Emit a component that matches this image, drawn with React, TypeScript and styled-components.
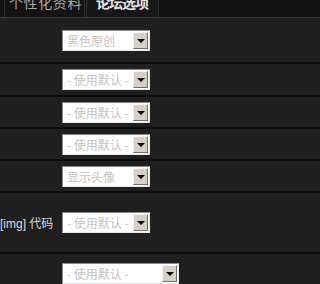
import styled, { createGlobalStyle } from "styled-components";

const GlobalStyle = createGlobalStyle`
  html, body {
    margin: 0;
    padding: 0;
    background: #1f1f1f;
    overflow: hidden;
  }
  body {
    font-family: "Liberation Sans", "Noto Sans CJK SC", sans-serif;
  }
`;

const TabBar = styled.div`
  display: flex;
  height: 17px;
  background: #121212;
  border-bottom: 1px solid #3a3a3a;
  overflow: hidden;
`;

const Tab = styled.div<{ $active?: boolean }>`
  display: flex;
  align-items: flex-end;
  height: 17px;
  margin-left: ${(p) => (p.$active ? "1px" : "4px")};
  padding: 0 ${(p) => (p.$active ? "10px" : "2px")} 0 ${(p) => (p.$active ? "9px" : "4px")};
  border-left: 1px solid #2e2e2e;
  border-right: 1px solid #2e2e2e;
  background: ${(p) => (p.$active ? "#171717" : "#131313")};
  color: ${(p) => (p.$active ? "#e4e4e4" : "#a8a8a8")};
  font-weight: ${(p) => (p.$active ? "bold" : "normal")};
  font-family: "Noto Sans CJK SC", sans-serif;
  font-size: 14px;
  letter-spacing: ${(p) => (p.$active ? "-1px" : "0.6px")};
  line-height: 14px;
  white-space: nowrap;
  span {
    display: block;
    margin-bottom: 8px;
  }
`;

const Rows = styled.div`
  display: flex;
  flex-direction: column;
`;

const Row = styled.div<{ $h: number }>`
  display: grid;
  grid-template-columns: 62px auto;
  align-items: center;
  height: ${(p) => p.$h}px;
  border-bottom: 2px solid #0b0b0b;
  box-sizing: border-box;
`;

const Label = styled.div`
  color: #dcdcdc;
  font-size: 12px;
  text-align: right;
  padding-right: 11px;
  white-space: nowrap;
`;

const Select = styled.div<{ $w: number }>`
  display: flex;
  align-items: center;
  width: ${(p) => p.$w}px;
  height: 21px;
  box-sizing: border-box;
  border-top: 1px solid #8a8a8a;
  border-left: 1px solid #8a8a8a;
  border-right: 1px solid #e8e8e8;
  border-bottom: 1px solid #e8e8e8;
  background: #fff;
  padding: 1px;
`;

const Value = styled.div`
  flex: 1;
  color: #c4c4c4;
  font-family: "Noto Sans CJK SC", sans-serif;
  font-size: 12px;
  padding-left: 3px;
  white-space: nowrap;
  overflow: hidden;
`;

const Arrow = styled.div`
  display: flex;
  align-items: center;
  justify-content: center;
  width: 15px;
  height: 17px;
  box-sizing: border-box;
  background: #d4d0c8;
  border-top: 1px solid #f4f4f4;
  border-left: 1px solid #f4f4f4;
  border-right: 1px solid #6e6e6e;
  border-bottom: 1px solid #6e6e6e;
  &::after {
    content: "";
    border-left: 4px solid transparent;
    border-right: 4px solid transparent;
    border-top: 4px solid #000;
    margin-top: 1px;
  }
`;

const rows = [
  { h: 46, value: "黑色原创", label: "", w: 88 },
  { h: 33, value: "- 使用默认 -", label: "", w: 88 },
  { h: 32, value: "- 使用默认 -", label: "", w: 88 },
  { h: 32, value: "- 使用默认 -", label: "", w: 88 },
  { h: 32, value: "显示头像", label: "", w: 88 },
  { h: 61, value: "- 使用默认 -", label: "[img] 代码", w: 88 },
  { h: 40, value: "- 使用默认 -", label: "", w: 117 },
];

export default function App() {
  return (
    <>
      <GlobalStyle />
      <TabBar>
        <Tab>
          <span>个性化资料</span>
        </Tab>
        <Tab $active>
          <span>论坛选项</span>
        </Tab>
      </TabBar>
      <Rows>
        {rows.map((r, i) => (
          <Row key={i} $h={r.h}>
            <Label>{r.label}</Label>
            <div>
              <Select $w={r.w}>
                <Value>{r.value}</Value>
                <Arrow />
              </Select>
            </div>
          </Row>
        ))}
      </Rows>
    </>
  );
}
